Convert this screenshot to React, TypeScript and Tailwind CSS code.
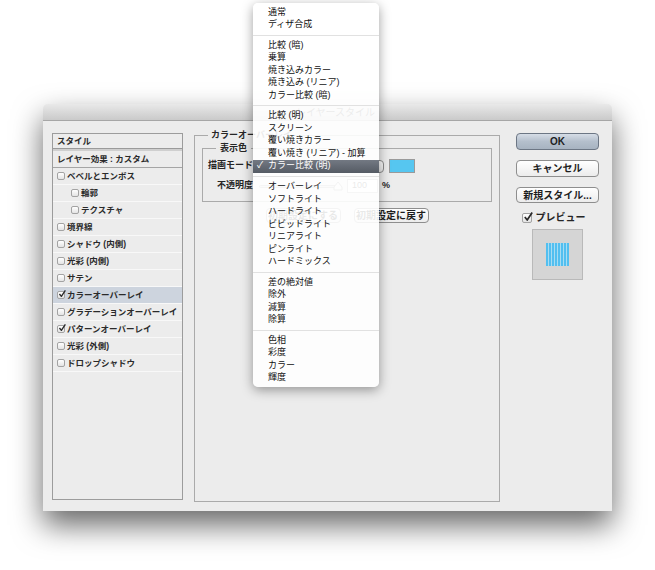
import React from 'react';

const blendModes: string[] = [
    '通常',
    'ディザ合成',
    '-',
    '比較 (暗)',
    '乗算',
    '焼き込みカラー',
    '焼き込み (リニア)',
    'カラー比較 (暗)',
    '-',
    '比較 (明)',
    'スクリーン',
    '覆い焼きカラー',
    '覆い焼き (リニア) - 加算',
    'カラー比較 (明)',
    '-',
    'オーバーレイ',
    'ソフトライト',
    'ハードライト',
    'ビビッドライト',
    'リニアライト',
    'ピンライト',
    'ハードミックス',
    '-',
    '差の絶対値',
    '除外',
    '減算',
    '除算',
    '-',
    '色相',
    '彩度',
    'カラー',
    '輝度',
];

const currentMode = 'カラー比較 (明)';

type StyleItem = { label: string; indent?: boolean; checked?: boolean; selected?: boolean };

const styleItems: StyleItem[] = [
    { label: 'ベベルとエンボス' },
    { label: '輪郭', indent: true },
    { label: 'テクスチャ', indent: true },
    { label: '境界線' },
    { label: 'シャドウ (内側)' },
    { label: '光彩 (内側)' },
    { label: 'サテン' },
    { label: 'カラーオーバーレイ', checked: true, selected: true },
    { label: 'グラデーションオーバーレイ' },
    { label: 'パターンオーバーレイ', checked: true },
    { label: '光彩 (外側)' },
    { label: 'ドロップシャドウ' },
];

const CheckBox = ({ checked, size = 8 }: { checked?: boolean; size?: number }) => (
    <span
        className="relative inline-block shrink-0 rounded-[2px] border border-[#a3a3a3] bg-gradient-to-b from-white to-[#e4e4e4]"
        style={{ width: size, height: size }}
    >
        {checked && (
            <svg
                viewBox="0 0 10 10"
                className="absolute left-[0px] top-[-2px] overflow-visible"
                style={{ width: size, height: size }}
            >
                <path d="M1.8 5 L4.2 8 L9.2 0.5" fill="none" stroke="#2a2a2a" strokeWidth="1.7" strokeLinejoin="round" />
            </svg>
        )}
    </span>
);

const MacButton = ({ label, primary, className = '' }: { label: string; primary?: boolean; className?: string }) => (
    <div
        className={`flex items-center justify-center whitespace-nowrap rounded-[4px] border text-[10px] font-bold text-[#1e1e1e] ${
            primary
                ? 'border-[#6c7684] bg-gradient-to-b from-[#d6dde6] via-[#b4bfcc] to-[#a7b3c1]'
                : 'border-[#8e8e8e] bg-gradient-to-b from-white to-[#ececec]'
        } ${className}`}
    >
        {label}
    </div>
);

const StyleList = () => (
    <div className="flex h-[367px] w-[131px] flex-col whitespace-nowrap border border-[#9c9c9c] bg-[#ececec] text-[8.5px] font-bold text-[#2a2a2a]">
        <div className="flex h-[15px] items-center border-b border-[#9a9a9a] pl-[4px]">スタイル</div>
        <div className="h-[2px] bg-[#cfcfcf]" />
        <div className="flex h-[17px] items-center border-b border-[#a5a5a5] pl-[4px]">レイヤー効果 : カスタム</div>
        {styleItems.map((item) => (
            <div
                key={item.label}
                className={`flex h-[17px] items-center gap-[2px] border-b border-[#f8f8f8] ${
                    item.indent ? 'pl-[18px]' : 'pl-[4px]'
                } ${item.selected ? 'bg-[#cdd4de]' : ''}`}
            >
                <CheckBox checked={item.checked} />
                <span>{item.label}</span>
            </div>
        ))}
    </div>
);

const BlendMenu = () => (
    <div className="absolute left-[253px] top-[3px] w-[126px] rounded-[5px] bg-white/[0.9] py-[3px] text-[9px] text-[#111] shadow-[0_3px_12px_rgba(0,0,0,0.38)]">
        {blendModes.map((mode, i) =>
            mode === '-' ? (
                <div key={i} className="flex h-[8px] items-center">
                    <div className="h-px w-full bg-[#e1e1e1]" />
                </div>
            ) : mode === currentMode ? (
                <div
                    key={i}
                    className="flex h-[13px] items-center bg-gradient-to-b from-[#737983] to-[#555b64] text-white"
                >
                    <span className="w-[15px] pl-[4px] text-[9px]">✓</span>
                    <span>{mode}</span>
                </div>
            ) : (
                <div key={i} className="flex h-[12.5px] items-center pl-[15px]">
                    {mode}
                </div>
            ),
        )}
    </div>
);

const ColorOverlayPanel = () => (
    <fieldset className="ml-[11px] mt-[8px] h-[373px] w-[306px] border border-[#aaaaaa] px-[7px] text-[9px] font-bold text-[#262626]">
        <legend className="ml-[6px] px-[3px] leading-[13px]">カラーオーバーレイ</legend>
        <fieldset className="h-[60px] w-[290px] border border-[#aaaaaa] pl-[4px]">
            <legend className="ml-[9px] px-[4px] leading-[13px]">表示色</legend>
            <div className="mt-[4px] flex items-center">
                <span className="w-[46px] text-right">描画モード</span>
                <div className="ml-[1px] h-[13px] w-[130px] rounded-[4px] border border-[#8c8c8c] bg-gradient-to-b from-white to-[#e6e6e6]" />
                <div className="ml-[5px] h-[14px] w-[26px] border border-[#9a9a9a] bg-[#56c6f0]" />
            </div>
            <div className="mt-[6px] flex items-center">
                <span className="w-[46px] text-right">不透明度</span>
                <div className="relative ml-[6px] flex h-[13px] w-[80px] items-center">
                    <div className="h-[3px] w-full rounded-full border border-[#9a9a9a] bg-[#d8d8d8]" />
                    <svg viewBox="0 0 10 10" className="absolute right-[-4px] top-[1px] h-[10px] w-[10px]">
                        <path d="M5 1 L9 6 L9 9 L1 9 L1 6 Z" fill="#f4f4f4" stroke="#888" strokeWidth="1" />
                    </svg>
                </div>
                <div className="ml-[8px] flex h-[14px] w-[31px] items-center border border-[#a0a0a0] bg-white pl-[4px] font-normal">
                    100
                </div>
                <span className="ml-[4px]">%</span>
            </div>
        </fieldset>
        <div className="mt-[6px] flex justify-center gap-[13px]">
            <MacButton label="初期設定にする" className="h-[15px] w-[75px] text-[9px]" />
            <MacButton label="初期設定に戻す" className="h-[15px] w-[75px] text-[9px]" />
        </div>
    </fieldset>
);

const RightColumn = () => (
    <div className="ml-[16px] mt-[12px] flex w-[83px] flex-col items-center">
        <MacButton label="OK" primary className="h-[17px] w-full" />
        <MacButton label="キャンセル" className="mt-[10px] h-[17px] w-full" />
        <MacButton label="新規スタイル..." className="mt-[10px] h-[16px] w-full" />
        <div className="mt-[7px] flex items-center gap-[4px] pr-[8px] text-[10px] font-bold text-[#262626]">
            <CheckBox checked size={10} />
            <span>プレビュー</span>
        </div>
        <div className="mt-[4px] flex h-[51px] w-[51px] items-center justify-center border border-[#b9b9b9] bg-[#d5d5d5]">
            <div className="h-[23px] w-[23px] bg-[repeating-linear-gradient(90deg,#52bff0_0px,#52bff0_2px,#a8dcf2_2px,#a8dcf2_3px)]" />
        </div>
    </div>
);

export default function App() {
    return (
        <div className="relative h-[570px] w-[655px] overflow-hidden bg-white font-['Liberation_Sans','Noto_Sans_CJK_JP',sans-serif]">
            <div className="ml-[43px] mt-[104px] h-[407px] w-[569px] rounded-t-[5px] bg-[#ececec] shadow-[0_14px_30px_rgba(0,0,0,0.6)]">
                <div className="flex h-[17px] items-center justify-center rounded-t-[5px] border-b border-[#a6a6a6] bg-gradient-to-b from-[#e9e9e9] to-[#cacaca] pl-[16px] text-[10px] text-[#3c3c3c]">
                    レイヤースタイル
                </div>
                <div className="flex items-start pl-[9px]">
                    <div className="mt-[12px]">
                        <StyleList />
                    </div>
                    <ColorOverlayPanel />
                    <RightColumn />
                </div>
            </div>
            <BlendMenu />
        </div>
    );
}
